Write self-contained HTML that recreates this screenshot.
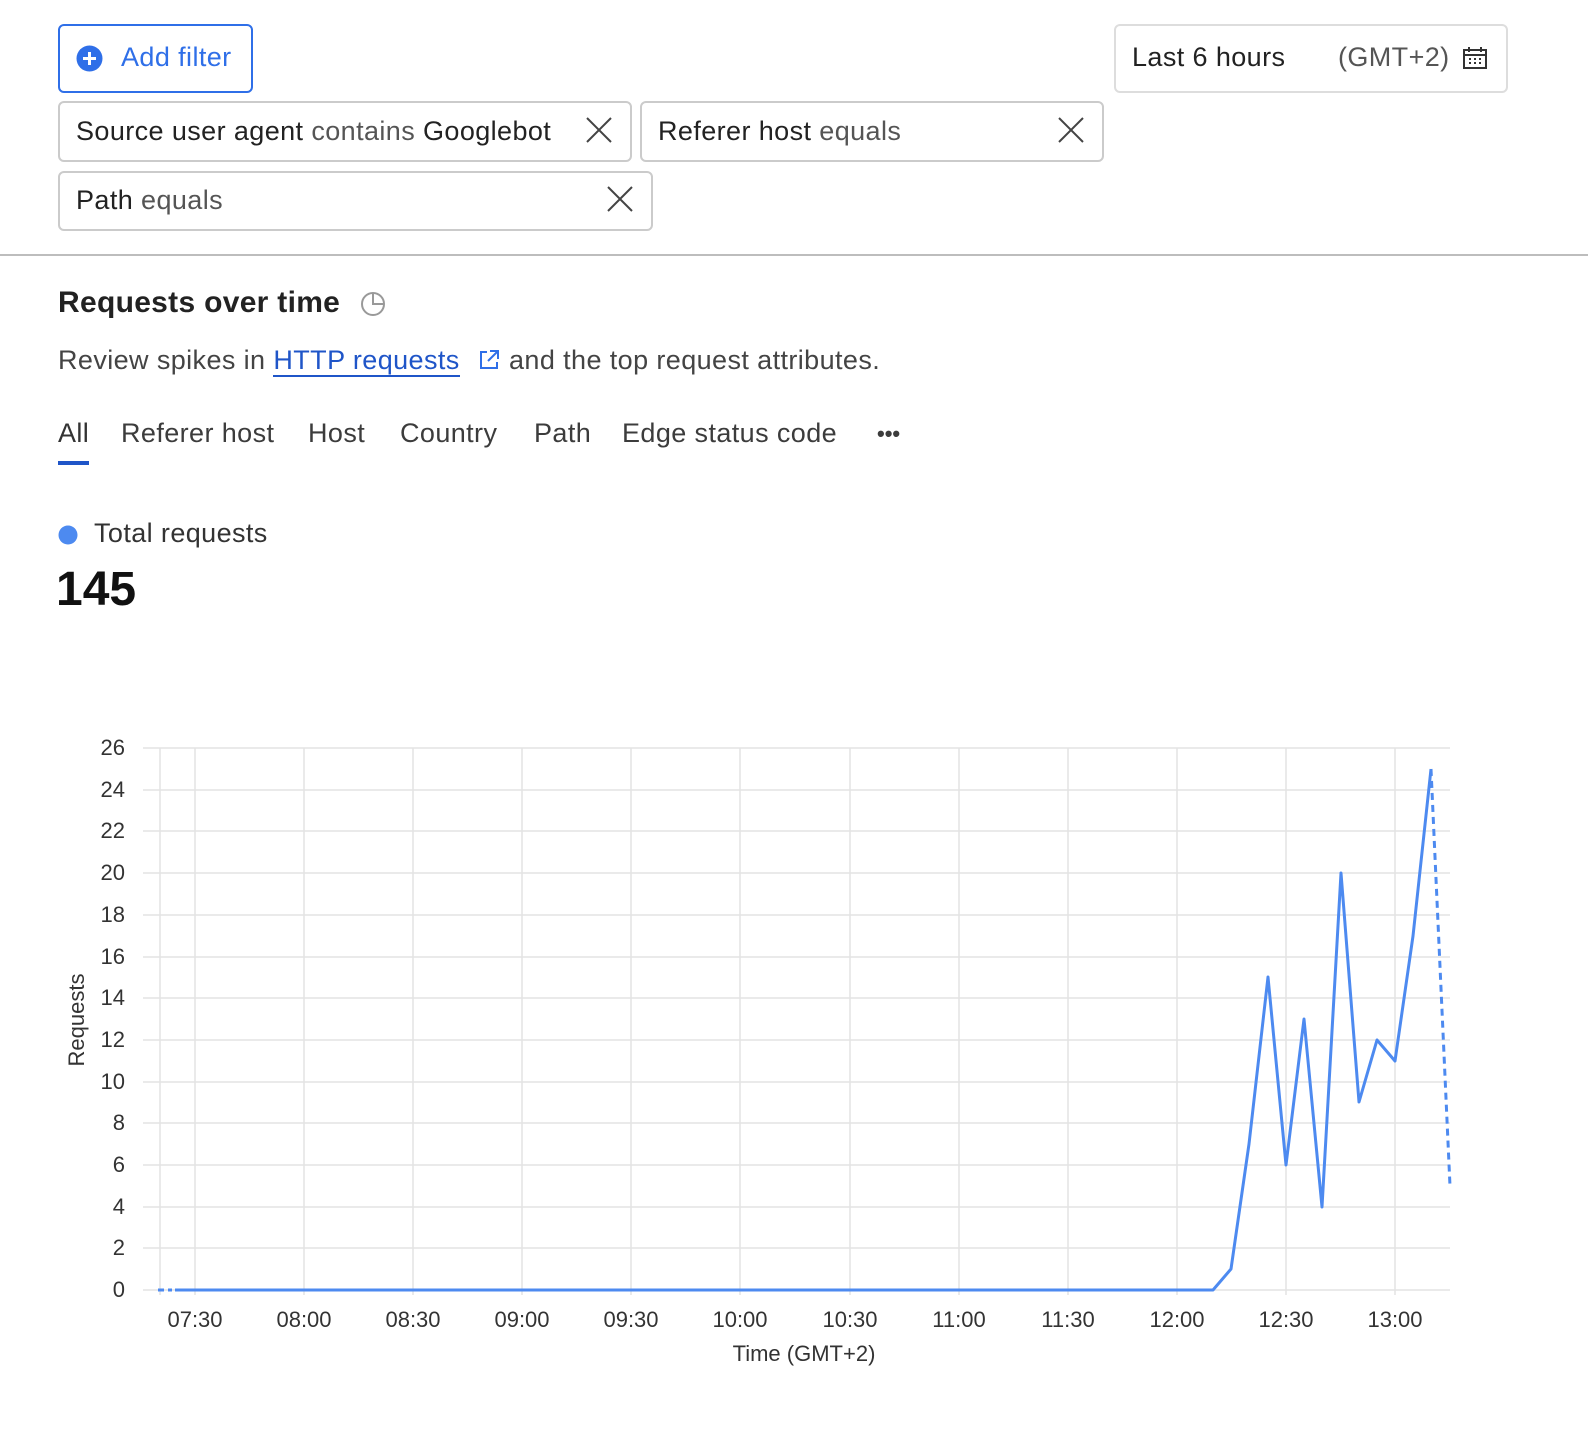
<!DOCTYPE html>
<html><head><meta charset="utf-8"><style>
body{margin:0;width:1588px;height:1444px;background:#fff;font-family:"Liberation Sans",sans-serif;color:#313131;position:relative;overflow:hidden}
.a{position:absolute}
.box{position:absolute;border:2px solid #cbcbcb;border-radius:6px;box-sizing:border-box}
.t{font-size:27px;white-space:nowrap;letter-spacing:0.4px}
.x{position:absolute;width:26px;height:26px}
.tab{position:absolute;top:418px;font-size:27px;color:#3c3c3c;letter-spacing:0.4px}
</style></head><body>
<div class="box" style="left:58px;top:24px;width:195px;height:69px;border-color:#2f6fe8"></div>
<svg class="a" style="left:76px;top:45px" width="27" height="27"><circle cx="13.5" cy="13.5" r="13" fill="#2f6fe8"/><path d="M13.5 7v13M7 13.5h13" stroke="#fff" stroke-width="3"/></svg>
<div class="a t" style="left:121px;top:42px;color:#2f6fe8">Add filter</div>

<div class="box" style="left:1114px;top:24px;width:394px;height:69px;border-color:#ddd"></div>
<div class="a t" style="left:1132px;top:42px;color:#222">Last 6 hours</div>
<div class="a t" style="left:1338px;top:42px;color:#555">(GMT+2)</div>
<svg class="a" style="left:1462px;top:46px" width="26" height="24"><rect x="2" y="4" width="22" height="18" fill="none" stroke="#333" stroke-width="2"/><path d="M2 9h22M7 1v5M19 1v5" stroke="#333" stroke-width="2"/><g fill="#333"><rect x="7" y="12" width="2" height="2"/><rect x="12" y="12" width="2" height="2"/><rect x="17" y="12" width="2" height="2"/><rect x="7" y="16" width="2" height="2"/><rect x="12" y="16" width="2" height="2"/><rect x="17" y="16" width="2" height="2"/></g></svg>

<div class="box" style="left:58px;top:101px;width:574px;height:61px"></div>
<div class="a t" style="left:76px;top:116px;color:#222">Source user agent <span style="color:#555">contains</span> Googlebot</div>
<svg class="x" style="left:586px;top:117px"><path d="M1 1L25 25M25 1L1 25" stroke="#444" stroke-width="2"/></svg>
<div class="box" style="left:640px;top:101px;width:464px;height:61px"></div>
<div class="a t" style="left:658px;top:116px;color:#222">Referer host <span style="color:#555">equals</span></div>
<svg class="x" style="left:1058px;top:117px"><path d="M1 1L25 25M25 1L1 25" stroke="#444" stroke-width="2"/></svg>
<div class="box" style="left:58px;top:171px;width:595px;height:60px"></div>
<div class="a t" style="left:76px;top:185px;color:#222">Path <span style="color:#555">equals</span></div>
<svg class="x" style="left:607px;top:186px"><path d="M1 1L25 25M25 1L1 25" stroke="#444" stroke-width="2"/></svg>

<div class="a" style="left:0;top:254px;width:1588px;height:2px;background:#bdbdbd"></div>

<div class="a" style="left:58px;top:286px;font-size:30px;font-weight:bold;color:#222;letter-spacing:0.3px">Requests over time</div>
<svg class="a" style="left:360px;top:291px" width="26" height="26"><circle cx="13" cy="13" r="11" fill="none" stroke="#999" stroke-width="2"/><path d="M13 2v11h11" fill="none" stroke="#999" stroke-width="2"/></svg>
<div class="a t" style="left:58px;top:345px;color:#444">Review spikes in <span style="color:#1f55c8;border-bottom:2px solid #1f55c8">HTTP requests</span></div>
<svg class="a" style="left:478px;top:349px" width="22" height="22"><path d="M9 3H3v16h16v-6M12 2h8v8M20 2L10 12" fill="none" stroke="#2f6fe8" stroke-width="2"/></svg>
<div class="a t" style="left:509px;top:345px;color:#444">and the top request attributes.</div>

<div class="tab" style="left:58px;color:#333">All</div>
<div class="a" style="left:58px;top:461px;width:31px;height:4px;background:#1f55c8"></div>
<div class="tab" style="left:121px">Referer host</div>
<div class="tab" style="left:308px">Host</div>
<div class="tab" style="left:400px">Country</div>
<div class="tab" style="left:534px">Path</div>
<div class="tab" style="left:622px">Edge status code</div>
<div class="tab" style="left:877px;top:421px;font-size:22px;font-weight:bold;letter-spacing:0">•••</div>

<svg class="a" style="left:58px;top:525px" width="20" height="20"><circle cx="10" cy="10" r="9.5" fill="#4d8af0"/></svg>
<div class="a t" style="left:94px;top:518px;color:#333">Total requests</div>
<div class="a" style="left:56px;top:562px;font-size:48px;font-weight:bold;color:#111">145</div>

<svg class="a" style="left:0;top:0" width="1588" height="1444" font-family="Liberation Sans, sans-serif">
<g stroke="#e3e3e3" stroke-width="1.5">
<line x1="143" x2="1450" y1="748" y2="748"/><line x1="143" x2="1450" y1="790" y2="790"/><line x1="143" x2="1450" y1="831" y2="831"/><line x1="143" x2="1450" y1="873" y2="873"/><line x1="143" x2="1450" y1="915" y2="915"/><line x1="143" x2="1450" y1="957" y2="957"/><line x1="143" x2="1450" y1="998" y2="998"/><line x1="143" x2="1450" y1="1040" y2="1040"/><line x1="143" x2="1450" y1="1082" y2="1082"/><line x1="143" x2="1450" y1="1123" y2="1123"/><line x1="143" x2="1450" y1="1165" y2="1165"/><line x1="143" x2="1450" y1="1207" y2="1207"/><line x1="143" x2="1450" y1="1248" y2="1248"/><line x1="143" x2="1450" y1="1290" y2="1290"/>
<line x1="160" x2="160" y1="748" y2="1295"/><line x1="195" x2="195" y1="748" y2="1295"/><line x1="304" x2="304" y1="748" y2="1295"/><line x1="413" x2="413" y1="748" y2="1295"/><line x1="522" x2="522" y1="748" y2="1295"/><line x1="631" x2="631" y1="748" y2="1295"/><line x1="740" x2="740" y1="748" y2="1295"/><line x1="850" x2="850" y1="748" y2="1295"/><line x1="959" x2="959" y1="748" y2="1295"/><line x1="1068" x2="1068" y1="748" y2="1295"/><line x1="1177" x2="1177" y1="748" y2="1295"/><line x1="1286" x2="1286" y1="748" y2="1295"/><line x1="1395" x2="1395" y1="748" y2="1295"/>
</g>
<g font-size="22" fill="#333" text-anchor="end">
<text x="125" y="755">26</text><text x="125" y="797">24</text><text x="125" y="838">22</text><text x="125" y="880">20</text><text x="125" y="922">18</text><text x="125" y="964">16</text><text x="125" y="1005">14</text><text x="125" y="1047">12</text><text x="125" y="1089">10</text><text x="125" y="1130">8</text><text x="125" y="1172">6</text><text x="125" y="1214">4</text><text x="125" y="1255">2</text><text x="125" y="1297">0</text>
</g>
<g font-size="22" fill="#333" text-anchor="middle">
<text x="195" y="1327">07:30</text><text x="304" y="1327">08:00</text><text x="413" y="1327">08:30</text><text x="522" y="1327">09:00</text><text x="631" y="1327">09:30</text><text x="740" y="1327">10:00</text><text x="850" y="1327">10:30</text><text x="959" y="1327">11:00</text><text x="1068" y="1327">11:30</text><text x="1177" y="1327">12:00</text><text x="1286" y="1327">12:30</text><text x="1395" y="1327">13:00</text>
<text x="804" y="1361">Time (GMT+2)</text>
<text transform="translate(84 1020) rotate(-90)">Requests</text>
</g>
<path d="M158 1290H172" stroke="#4d8af0" stroke-width="3" stroke-dasharray="6 4" fill="none"/>
<path d="M175 1290H1213L1231 1269L1249 1144L1268 977L1286 1165L1304 1019L1322 1207L1341 873L1359 1102L1377 1040L1395 1061L1413 936L1431 769" stroke="#4d8af0" stroke-width="3" fill="none" stroke-linejoin="round"/>
<path d="M1431 769L1450 1186" stroke="#4d8af0" stroke-width="3" stroke-dasharray="7 5" fill="none"/>
</svg>
</body></html>
